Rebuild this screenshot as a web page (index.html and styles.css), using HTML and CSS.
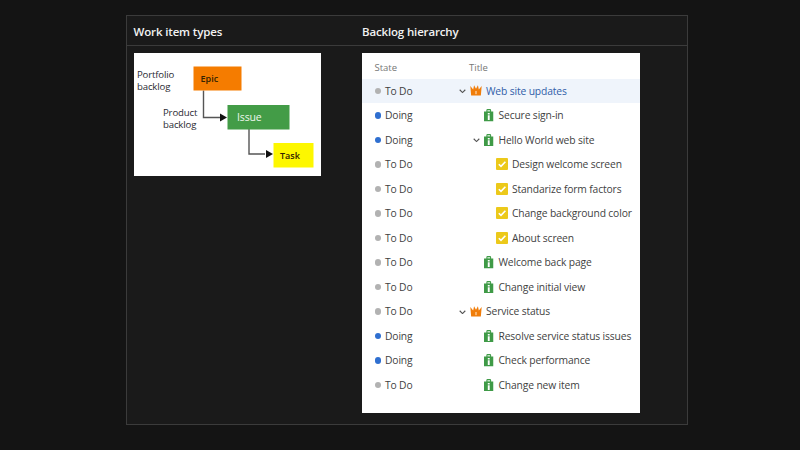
FILE: index.html
```html
<!DOCTYPE html>
<html lang="en">
<head>
<meta charset="utf-8">
<title>Backlog hierarchy</title>
<link rel="stylesheet" href="styles.css">
</head>
<body>
<svg class="defs" width="0" height="0" aria-hidden="true">
  <defs>
    <symbol id="crown" viewBox="0 0 13 12">
      <path fill="#f07d0a" d="M0.3 1 L3.4 5 L4.4 0.4 L6.5 4 L8.6 0.4 L9.6 5 L12.7 1 L11.8 11.4 H1.2 Z"/>
      <path fill="#f9b36b" d="M5.4 6.5 H7.6 V10 H5.4 Z"/>
    </symbol>
    <symbol id="story" viewBox="0 0 10 13">
      <path fill="#3f9a47" d="M0 2.5 H2.5 V1.2 Q2.5 0 3.7 0 H6.3 Q7.5 0 7.5 1.2 V2.5 H10 V13 H0 Z"/>
      <path fill="#bfe3c2" d="M3.6 1 H6.4 V2.5 H3.6 Z"/>
      <path fill="#fff" d="M4 4 H6 V5.6 H4 Z M4 6.6 H6 V11.5 H4 Z"/>
    </symbol>
    <symbol id="task" viewBox="0 0 12 12">
      <rect width="12" height="12" rx="1" fill="#ecc91a"/>
      <path d="M2.8 6.2 L5 8.4 L9.4 3.8" fill="none" stroke="#fff" stroke-width="1.6"/>
    </symbol>
    <symbol id="chev" viewBox="0 0 8 5">
      <path d="M0.8 0.8 L4 4 L7.2 0.8" fill="none" stroke="#555" stroke-width="1.3"/>
    </symbol>
  </defs>
</svg>
<main class="frame">
  <div class="col col-left">
    <h2 class="head">Work item types</h2>
    <div class="cell">
      <svg class="diagram" width="187" height="123" viewBox="0 0 187 123">
        <rect width="187" height="123" fill="#fff"/>
        <path d="M69.5 37.5 V64.5 H86 M115 76 V101 H131" fill="none" stroke="#555" stroke-width="1.4"/>
        <path d="M93 64.5 L86 60.5 V68.5 Z M139 101 L132 97 V105 Z" fill="#111"/>
        <rect x="59.5" y="13.5" width="48" height="24" fill="#f57c00"/>
        <rect x="93.5" y="52" width="62" height="24.5" fill="#439c47"/>
        <rect x="139.5" y="90" width="40" height="24.5" fill="#fdf700"/>
        <g class="dlabel">
          <text x="3" y="24.5">Portfolio</text>
          <text x="3" y="37">backlog</text>
          <text x="29" y="62.5">Product</text>
          <text x="29" y="74.5">backlog</text>
          <text x="66.5" y="29" class="dark">Epic</text>
          <text x="103" y="67.5" class="light">Issue</text>
          <text x="146" y="105.5" class="dark">Task</text>
        </g>
      </svg>
    </div>
  </div>
  <div class="col col-right">
    <h2 class="head">Backlog hierarchy</h2>
    <div class="cell">
      <section class="backlog">
        <div class="row row-head"><span class="state">State</span><span class="title-head">Title</span></div>

        <div class="row selected">
          <span class="state"><i class="dot todo"></i>To Do</span>
          <span class="title lvl0"><svg class="chev"><use href="#chev"/></svg><svg class="ic-crown"><use href="#crown"/></svg><span class="link">Web site updates</span></span>
        </div>
        <div class="row">
          <span class="state"><i class="dot doing"></i>Doing</span>
          <span class="title lvl1"><svg class="ic-story"><use href="#story"/></svg>Secure sign-in</span>
        </div>
        <div class="row">
          <span class="state"><i class="dot doing"></i>Doing</span>
          <span class="title lvl1"><svg class="chev"><use href="#chev"/></svg><svg class="ic-story"><use href="#story"/></svg>Hello World web site</span>
        </div>
        <div class="row">
          <span class="state"><i class="dot todo"></i>To Do</span>
          <span class="title lvl2"><svg class="ic-task"><use href="#task"/></svg>Design welcome screen</span>
        </div>
        <div class="row">
          <span class="state"><i class="dot todo"></i>To Do</span>
          <span class="title lvl2"><svg class="ic-task"><use href="#task"/></svg>Standarize form factors</span>
        </div>
        <div class="row">
          <span class="state"><i class="dot todo"></i>To Do</span>
          <span class="title lvl2"><svg class="ic-task"><use href="#task"/></svg>Change background color</span>
        </div>
        <div class="row">
          <span class="state"><i class="dot todo"></i>To Do</span>
          <span class="title lvl2"><svg class="ic-task"><use href="#task"/></svg>About screen</span>
        </div>
        <div class="row">
          <span class="state"><i class="dot todo"></i>To Do</span>
          <span class="title lvl1"><svg class="ic-story"><use href="#story"/></svg>Welcome back page</span>
        </div>
        <div class="row">
          <span class="state"><i class="dot todo"></i>To Do</span>
          <span class="title lvl1"><svg class="ic-story"><use href="#story"/></svg>Change initial view</span>
        </div>
        <div class="row">
          <span class="state"><i class="dot todo"></i>To Do</span>
          <span class="title lvl0"><svg class="chev"><use href="#chev"/></svg><svg class="ic-crown"><use href="#crown"/></svg>Service status</span>
        </div>
        <div class="row">
          <span class="state"><i class="dot doing"></i>Doing</span>
          <span class="title lvl1"><svg class="ic-story"><use href="#story"/></svg>Resolve service status issues</span>
        </div>
        <div class="row">
          <span class="state"><i class="dot doing"></i>Doing</span>
          <span class="title lvl1"><svg class="ic-story"><use href="#story"/></svg>Check performance</span>
        </div>
        <div class="row">
          <span class="state"><i class="dot todo"></i>To Do</span>
          <span class="title lvl1"><svg class="ic-story"><use href="#story"/></svg>Change new item</span>
        </div>
      </section>
    </div>
  </div>
</main>
</body>
</html>
```
FILE: styles.css
```css
* { box-sizing: border-box; }
html, body { margin: 0; height: 100%; }
body {
  background: #141414;
  font-family: "Open Sans", "Noto Sans", "Liberation Sans", sans-serif;
  overflow: hidden;
  padding: 15px 112px 25px 126px;
}
.defs { display: block; height: 0; }
.frame {
  height: 410px;
  border: 1px solid #3b3b3b;
  background: #1a1a1a;
  display: grid;
  grid-template-columns: 229px 1fr;
}
.col { display: flex; flex-direction: column; }
.head {
  margin: 0;
  height: 30px;
  border-bottom: 1px solid #3b3b3b;
  padding: 1px 6px 0;
  font-size: 11.5px;
  font-weight: 600;
  letter-spacing: -0.15px;
  line-height: 29px;
  color: #f2f2f2;
}
.col-left .head { padding-left: 6.5px; }
.cell { padding: 7px 7px 0; }
.col-right .cell { padding: 7px 0 0 6px; }
.diagram { display: block; }
.dlabel text { font-size: 9.6px; letter-spacing: -0.15px; fill: #2a2a33; }
.dlabel .dark { font-size: 9px; font-weight: 600; letter-spacing: 0; fill: #332200; }
.dlabel .light { fill: #eef7ee; font-size: 10.5px; }
.backlog {
  width: 278px;
  height: 360px;
  background: #fff;
  padding-top: 1px;
}
.row {
  height: 24.5px;
  display: flex;
  align-items: center;
  font-size: 10.3px;
  letter-spacing: -0.14px;
  color: #3f3f3f;
}
.row-head { height: 24.7px; padding-top: 1.5px; font-size: 9.5px; letter-spacing: 0; color: #767676; }
.selected { background: #eff4fb; }
.state {
  width: 107px;
  padding-left: 12.5px;
  display: flex;
  align-items: center;
  flex: none;
}
.dot {
  width: 6.5px;
  height: 6.5px;
  border-radius: 50%;
  margin-right: 4px;
  flex: none;
}
.todo { background: #b2b2b2; }
.doing { background: #2f6fd0; }
.title-head { padding-left: 0; }
.title { position: relative; display: flex; align-items: center; white-space: nowrap; }
.lvl0 { padding-left: 1px; }
.lvl1 { padding-left: 15px; }
.lvl2 { padding-left: 27px; }
.chev { position: absolute; width: 7px; height: 4.5px; top: 50%; margin-top: -1.5px; }
.lvl0 .chev { left: -10px; }
.lvl1 .chev { left: 3.5px; }
.ic-crown { width: 12px; height: 11px; margin-right: 4px; flex: none; }
.ic-story { width: 9.5px; height: 12.5px; margin-right: 5px; flex: none; }
.ic-task { width: 12px; height: 12px; margin-right: 4px; flex: none; }
.link { color: #2f5da8; }
```
